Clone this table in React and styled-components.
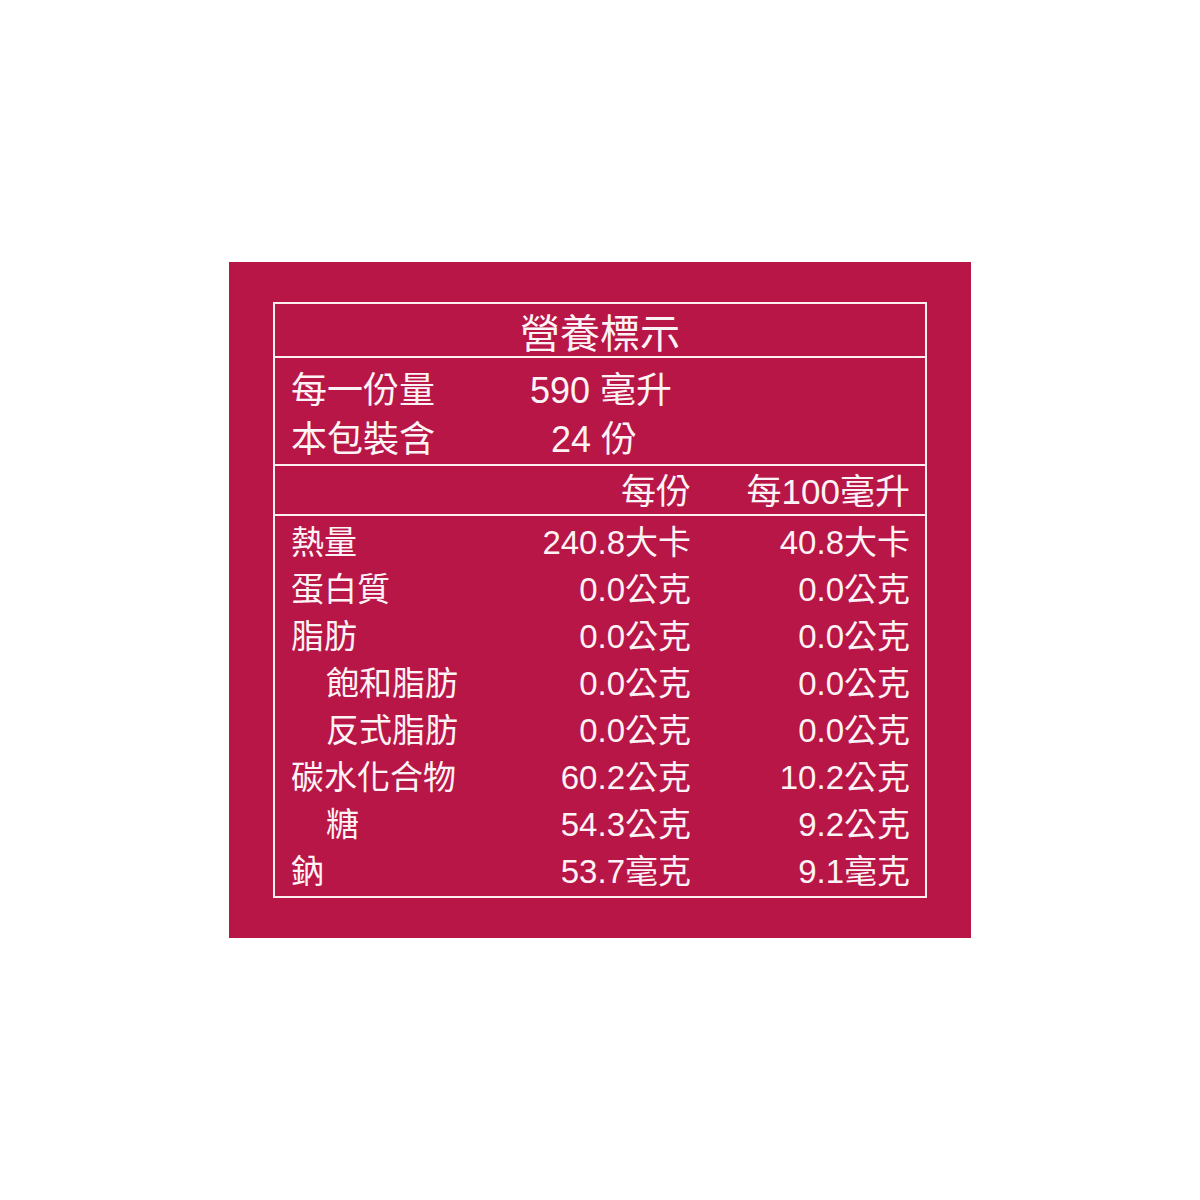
import React from 'react';
import styled, { createGlobalStyle } from 'styled-components';

const GlobalStyle = createGlobalStyle`
  body {
    margin: 0;
    background: #ffffff;
    font-family: "Liberation Sans", "Noto Sans CJK TC", sans-serif;
  }
`;

const Page = styled.div`
  width: 1200px;
  height: 1200px;
  display: flex;
  align-items: center;
  justify-content: center;
`;

const Panel = styled.div`
  width: 742px;
  height: 676px;
  box-sizing: border-box;
  padding: 40px 44px 40px 44px;
  background: #b71646;
  color: #fdf3f6;
`;

const Table = styled.div`
  height: 100%;
  box-sizing: border-box;
  border: 2px solid #fdeef2;
  display: flex;
  flex-direction: column;
`;

const Title = styled.div`
  height: 54px;
  border-bottom: 2px solid #fdeef2;
  display: flex;
  align-items: center;
  justify-content: center;
  font-size: 40px;
  line-height: 1;
  padding-top: 8px;
  box-sizing: border-box;
`;

const Section = styled.div`
  border-bottom: ${(p) => (p.last ? 'none' : '2px solid #fdeef2')};
  padding: ${(p) => p.pad || '0'};
  display: flex;
  flex-direction: column;
`;

const Row = styled.div`
  display: grid;
  grid-template-columns: 220px 180px 219px;
  align-items: center;
  height: ${(p) => p.h}px;
  padding: 0 15px 0 16px;
  font-size: ${(p) => p.size}px;
  line-height: 1;
`;

const Label = styled.span`
  padding-left: ${(p) => (p.sub ? '35px' : '0')};
  white-space: nowrap;
`;

const Value = styled.span`
  text-align: right;
  white-space: nowrap;
`;

const Serving = styled.span`
  grid-column: 2;
  text-align: center;
  white-space: nowrap;
  padding-right: ${(p) => p.shift || 0}px;
`;

const rows = [
  ['熱量', '240.8大卡', '40.8大卡'],
  ['蛋白質', '0.0公克', '0.0公克'],
  ['脂肪', '0.0公克', '0.0公克'],
  ['飽和脂肪', '0.0公克', '0.0公克', true],
  ['反式脂肪', '0.0公克', '0.0公克', true],
  ['碳水化合物', '60.2公克', '10.2公克'],
  ['糖', '54.3公克', '9.2公克', true],
  ['鈉', '53.7毫克', '9.1毫克'],
];

function App() {
  return (
    <Page>
      <GlobalStyle />
      <Panel>
        <Table>
          <Title>營養標示</Title>
          <Section pad="7px 0 0">
            <Row h={51} size={36}>
              <Label>每一份量</Label>
              <Serving>590 毫升</Serving>
            </Row>
            <Row h={48} size={36}>
              <Label>本包裝含</Label>
              <Serving shift={14}>24 份</Serving>
            </Row>
          </Section>
          <Section pad="2px 0 0">
            <Row h={46} size={35}>
              <Label></Label>
              <Value>每份</Value>
              <Value>每100毫升</Value>
            </Row>
          </Section>
          <Section last pad="3px 0 0">
            {rows.map(([name, per, per100, sub]) => (
              <Row key={name} h={47} size={33}>
                <Label sub={sub}>{name}</Label>
                <Value>{per}</Value>
                <Value>{per100}</Value>
              </Row>
            ))}
          </Section>
        </Table>
      </Panel>
    </Page>
  );
}

export default App;
